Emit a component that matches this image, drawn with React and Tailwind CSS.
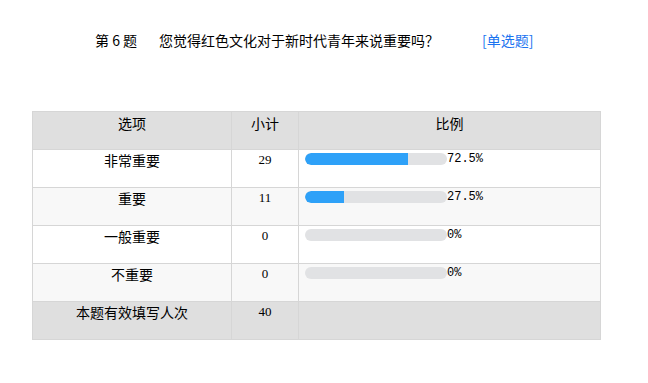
const rows = [
  { label: "非常重要", count: 29, pct: 72.5, bg: "bg-white" },
  { label: "重要", count: 11, pct: 27.5, bg: "bg-[#f8f8f8]" },
  { label: "一般重要", count: 0, pct: 0, bg: "bg-white" },
  { label: "不重要", count: 0, pct: 0, bg: "bg-[#f8f8f8]" },
];

function Bar({ pct }) {
  return (
    <div className="flex items-center h-[14px]">
      <div className="h-[12px] w-[142px] rounded-full bg-[#e1e2e4] overflow-hidden">
        <div className="h-full bg-[#2ea1f8] rounded-l-full" style={{ width: `${pct}%` }} />
      </div>
      <span className="text-[12px] leading-[14px] font-['Liberation_Mono',monospace] text-black">
        {pct === 0 ? "0%" : `${pct}%`}
      </span>
    </div>
  );
}

export default function App() {
  return (
    <div className="w-[648px] h-[383px] bg-white text-black font-['Noto_Sans_CJK_SC','Noto_Sans',sans-serif]">
      <div className="flex items-center h-[14px] pt-[40px] text-[14px] leading-[14px]">
        <span className="ml-[95px]">第 6 题</span>
        <span className="ml-[22px]">您觉得红色文化对于新时代青年来说重要吗？</span>
        <span className="ml-[43px] text-[#1a73f0]">[单选题]</span>
      </div>

      <table className="mt-[71px] ml-[32px] w-[569px] border-collapse table-fixed text-[14px] leading-[18px]">
        <colgroup>
          <col className="w-[199px]" />
          <col className="w-[67px]" />
          <col className="w-[302px]" />
        </colgroup>
        <thead>
          <tr className="bg-[#dfdfdf] h-[38px]">
            <th className="border border-[#d6d6d6] align-top pt-[2px] font-normal">选项</th>
            <th className="border border-[#d6d6d6] align-top pt-[2px] font-normal">小计</th>
            <th className="border border-[#d6d6d6] align-top pt-[2px] font-normal">比例</th>
          </tr>
        </thead>
        <tbody>
          {rows.map((r) => (
            <tr key={r.label} className={`${r.bg} h-[38px]`}>
              <td className="border border-[#d6d6d6] align-top pt-[1px] text-center">{r.label}</td>
              <td className="border border-[#d6d6d6] align-top pt-[1px] text-center font-['Liberation_Serif',serif] text-[13px]">
                {r.count}
              </td>
              <td className="border border-[#d6d6d6] align-top pt-[2px] pl-[6px]">
                <Bar pct={r.pct} />
              </td>
            </tr>
          ))}
          <tr className="bg-[#dfdfdf] h-[38px]">
            <td className="border border-[#d6d6d6] align-top pt-[1px] text-center">本题有效填写人次</td>
            <td className="border border-[#d6d6d6] align-top pt-[1px] text-center font-['Liberation_Serif',serif] text-[13px]">
              40
            </td>
            <td className="border border-[#d6d6d6]"></td>
          </tr>
        </tbody>
      </table>
    </div>
  );
}
